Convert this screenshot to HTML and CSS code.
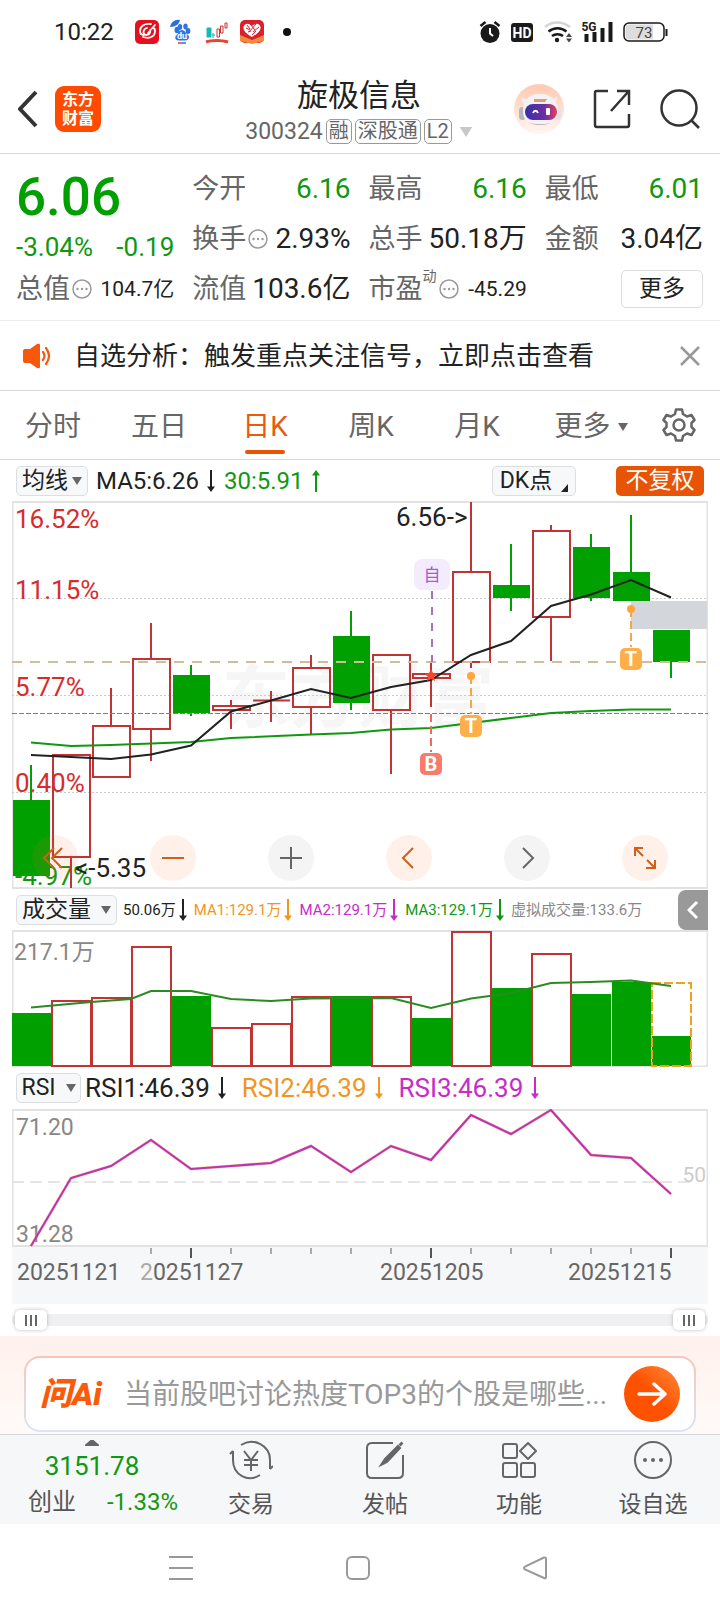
FILE: index.html
```html
<!DOCTYPE html>
<html lang="zh-CN">
<head>
    <meta charset="UTF-8">
    <meta name="viewport" content="width=device-width, initial-scale=1.0">
    <title>旋极信息 300324</title>
    <link rel="stylesheet" href="styles.css">
</head>
<body>

<!-- Shared symbols -->
<svg class="defs" width="0" height="0" aria-hidden="true">
    <symbol id="down" viewBox="0 0 8 24"><path d="M4 1V20" stroke="currentColor" stroke-width="2"/><path d="M0 17.500H8L4 23Z" fill="currentColor"/></symbol>
    <symbol id="up" viewBox="0 0 8 24"><path d="M4 23V4" stroke="currentColor" stroke-width="2"/><path d="M0 6.500H8L4 1Z" fill="currentColor"/></symbol>
    <symbol id="caret" viewBox="0 0 10 8"><path d="M0 0H10L5 8Z" fill="currentColor"/></symbol>
    <symbol id="info" viewBox="0 0 20 20"><circle cx="10" cy="10" r="9" fill="none" stroke="#999" stroke-width="1.500"/><g fill="#999"><circle cx="5.500" cy="10" r="1.200"/><circle cx="10" cy="10" r="1.200"/><circle cx="14.500" cy="10" r="1.200"/></g></symbol>
</svg>

<!-- Status bar -->
<div class="status">
    <span class="clock">10:22</span>
    <svg class="app-icons" viewBox="134 18 160 28" width="160" height="28">
        <rect x="135" y="20" width="24" height="24" rx="5" fill="#e60f1e"/>
        <path d="M155 25l-7 8M151 24c-6-1-11 2-11 7 0 3 2 4 4 4M143 37c6 2 12 0 12-6 0-2-1-3-2-3M147 28c-4 1-5 6-1 7 3 0 5-2 4-5" fill="none" stroke="#fff" stroke-width="1.800" stroke-linecap="round"/>
        <path d="M170 27c1-5 5-8 10-7-1 4-4 7-10 7Z" fill="#2d6fd9"/>
        <g fill="#2f74e6">
            <ellipse cx="177" cy="30" rx="2.500" ry="3.200"/><ellipse cx="180" cy="27" rx="2.200" ry="3"/><ellipse cx="185.500" cy="26.500" rx="2.200" ry="3"/><ellipse cx="188" cy="31" rx="2.400" ry="3"/>
            <path d="M182 30c3 0 4 4 6.500 5.500 1.500 2-.5 5-3 5h-7c-3 0-4-3-2.500-5 2.500-1.500 3-5.500 6-5.500Z"/>
        </g>
        <text x="182" y="39" class="du">du</text>
        <path d="M178 43h4" stroke="#e33" stroke-width="1.500"/><path d="M182 43h4" stroke="#2d6fd9" stroke-width="1.500"/>
        <path d="M207 28h4v9h-4ZM213 33v5M212 35h3" fill="#16b9b9" stroke="#16b9b9"/>
        <path d="M217 29h2.500v8H217ZM220.500 26h2.500v7h-2.500ZM225 23h2v5h-2Z" fill="none" stroke="#c33"/>
        <path d="M206 42c5-2 16-2 22 0" fill="none" stroke="#e8452c" stroke-width="3"/>
        <rect x="240" y="20" width="24" height="23" rx="5" fill="#d9202b"/>
        <path d="M240 35l12 5 12-5v6l-12 3-12-3Z" fill="#f08a3c"/>
        <path d="M252 37c-5-3-9-6-8.500-10 1-4 6-4 8.500-1 2.500-3 7.500-3 8.500 1 .5 4-3.500 7-8.500 10Z" fill="#fff"/>
        <path d="M247 25l3 4M250 24l5 6M256 24l-7 8M259 27l-6 5M246 28l4 2M252 35l4-4M248 32l3-1" stroke="#d9202b" stroke-width="1"/>
        <circle cx="287" cy="32" r="4" fill="#111"/>
    </svg>
    <svg class="sys-icons" viewBox="480 18 190 28" width="190" height="28">
        <circle cx="491" cy="33.500" r="9.500" fill="#1a1a1a"/>
        <path d="M481.500 26l5-4M500.500 26l-5-4" stroke="#1a1a1a" stroke-width="2.500"/>
        <path d="M491 28v5.500l3 2.500" fill="none" stroke="#fff" stroke-width="2"/>
        <rect x="512" y="23" width="22" height="19" rx="3" fill="#1a1a1a"/>
        <text x="523" y="38" class="hd">HD</text>
        <path d="M546 27c7-6 17-6 25 0" fill="none" stroke="#d5d5d5" stroke-width="2.500"/>
        <path d="M549.500 31.500c5.500-4.500 12.500-4.500 18 0M553 36c3-2.500 8-2.500 11 0" fill="none" stroke="#1a1a1a" stroke-width="2.500"/>
        <circle cx="558" cy="40" r="2.200" fill="#1a1a1a"/>
        <path d="M567 37l3-4 3 4ZM567 38.500l3 4 3-4Z" fill="#444"/>
        <text x="590" y="31" class="net">5G</text>
        <path d="M587.500 34v8M595.500 32v10M603.500 28v14M611.500 22v20" stroke="#1a1a1a" stroke-width="4"/>
        <rect x="625" y="23" width="40" height="18" rx="5" fill="#fff" stroke="#1a1a1a" stroke-width="1.500"/>
        <path d="M630 24.500h24v15h-24c-2.500 0-3.500-1.500-3.500-4v-7c0-2.500 1-4 3.500-4Z" fill="#ddd"/>
        <path d="M667.500 29v7" stroke="#1a1a1a" stroke-width="2"/>
        <text x="645" y="38" class="battery">73</text>
    </svg>
</div>

<!-- Header -->
<header class="header">
    <div class="header-side">
        <button class="icon-button" aria-label="返回"><svg viewBox="0 0 20 38" width="20" height="38"><path d="M18 2L2 19 18 36" fill="none" stroke="#333" stroke-width="4"/></svg></button>
        <a class="logo" href="#"><span>东方</span><span>财富</span></a>
    </div>
    <div class="title">
        <h1>旋极信息</h1>
        <div class="code">
            <span>300324</span><span class="tag">融</span><span class="tag">深股通</span><span class="tag">L2</span>
            <svg class="code-caret" width="14" height="10"><use href="#caret"/></svg>
        </div>
    </div>
    <div class="header-side header-tools">
        <button class="icon-button" aria-label="智能助手">
            <svg viewBox="0 0 50 50" width="50" height="50">
                <defs>
                    <linearGradient id="halo" x2="0" y2="1"><stop stop-color="#ffc9b0"/><stop offset="1" stop-color="#fff6f2"/></linearGradient>
                    <linearGradient id="visor"><stop stop-color="#3a2fa8"/><stop offset=".6" stop-color="#6c2fa0"/><stop offset="1" stop-color="#e0405c"/></linearGradient>
                </defs>
                <circle cx="25" cy="25" r="25" fill="url(#halo)"/>
                <path d="M7 13c0 5 2 7 6 8l4-5c-4 0-7-1-10-3ZM43 13c0 5-2 7-6 8l-4-5c4 0 7-1 10-3Z" fill="#f2eeee"/>
                <rect x="5" y="23" width="7" height="13" rx="3.500" fill="#b9b4ba"/><rect x="39" y="23" width="8" height="13" rx="4" fill="#e4e0e4"/>
                <path d="M26 10c13 0 18 8 18 17 0 10-7 14-18 14S9 37 9 27c0-9 4-17 17-17Z" fill="#f4f2f4"/>
                <path d="M14 38c6 4 18 4 24 0-5 3-18 3-24 0Z" fill="#aaa"/>
                <path d="M20 15h13l-2 3H20Z" fill="#d9a06a"/>
                <rect x="11" y="20" width="32" height="16" rx="8" fill="url(#visor)"/>
                <path d="M19 29c1-3 4-3 5 0" fill="none" stroke="#fff" stroke-width="1.800"/><rect x="32" y="24" width="4" height="7" rx="1" fill="#fff"/>
            </svg>
        </button>
        <button class="icon-button" aria-label="分享"><svg viewBox="0 0 38 40" width="38" height="40" fill="none" stroke="#333" stroke-width="2.500"><path d="M15 2H3.500Q2 2 2 4V36Q2 38 4 38H34Q36 38 36 36V25M24 2H36V16M35 3L18 22"/></svg></button>
        <button class="icon-button" aria-label="搜索"><svg viewBox="0 0 40 40" width="40" height="40" fill="none" stroke="#333" stroke-width="2.500"><circle cx="19" cy="19" r="17.500"/><path d="M31 31l8 8"/></svg></button>
    </div>
</header>

<!-- Quote -->
<section class="quote">
    <div class="quote-col">
        <div class="price">6.06</div>
        <div class="change"><span>-3.04%</span><span>-0.19</span></div>
        <div class="cell"><span class="name">总值</span><svg class="info" width="20" height="20"><use href="#info"/></svg><b class="small">104.7亿</b></div>
    </div>
    <div class="quote-col">
        <div class="cell"><span class="name">今开</span><b class="green">6.16</b></div>
        <div class="cell"><span class="name">换手</span><svg class="info" width="20" height="20"><use href="#info"/></svg><b>2.93%</b></div>
        <div class="cell"><span class="name">流值</span><b>103.6亿</b></div>
    </div>
    <div class="quote-col">
        <div class="cell"><span class="name">最高</span><b class="green">6.16</b></div>
        <div class="cell"><span class="name">总手</span><b>50.18万</b></div>
        <div class="cell"><span class="name">市盈</span><sup>动</sup><svg class="info" width="20" height="20"><use href="#info"/></svg><b class="small">-45.29</b></div>
    </div>
    <div class="quote-col">
        <div class="cell"><span class="name">最低</span><b class="green">6.01</b></div>
        <div class="cell"><span class="name">金额</span><b>3.04亿</b></div>
        <div class="cell"><button class="more">更多</button></div>
    </div>
</section>

<!-- Notice -->
<section class="notice">
    <svg viewBox="0 0 30 26" width="30" height="26"><path d="M1 8q0-2 2-2h5l7-5q3-1 3 1v22q0 2-3 1l-7-5H3q-2 0-2-2Z" fill="#f8570c"/><path d="M21 9q3 4 0 8M24 5q6 8 0 16" fill="none" stroke="#f8570c" stroke-width="2.200" stroke-linecap="round"/></svg>
    <p>自选分析：触发重点关注信号，立即点击查看</p>
    <button class="icon-button" aria-label="关闭"><svg viewBox="0 0 20 20" width="20" height="20"><path d="M1 1L19 19M19 1L1 19" stroke="#999" stroke-width="2.500"/></svg></button>
</section>

<!-- Period tabs -->
<nav class="tabs">
    <a href="#">分时</a>
    <a href="#">五日</a>
    <a href="#" class="active">日K</a>
    <a href="#">周K</a>
    <a href="#">月K</a>
    <a href="#" class="tab-more">更多<svg width="10" height="8"><use href="#caret"/></svg></a>
    <button class="icon-button settings" aria-label="设置">
        <svg viewBox="0 0 34 34" width="34" height="34" fill="none" stroke="#666" stroke-width="2.500"><path stroke-linejoin="round" d="M14 1.500H20L21 6 25 8.500 29.500 7 32.500 12 29.500 15V19L32.500 22 29.500 27 25 25.500 21 28 20 32.500H14L13 28 9 25.500 4.500 27 1.500 22 4.500 19V15L1.500 12 4.500 7 9 8.500 13 6Z"/><circle cx="17" cy="17" r="5.500"/></svg>
    </button>
</nav>

<main class="charts">
    <!-- Candles -->
    <div class="bar bar-ma">
        <button class="chip">均线<svg width="10" height="8"><use href="#caret"/></svg></button>
        <span>MA5:6.26</span><svg class="arrow" width="8" height="24"><use href="#down"/></svg>
        <span class="green">30:5.91</span><svg class="arrow green" width="8" height="24"><use href="#up"/></svg>
        <button class="chip dk">DK点<svg width="7" height="8"><path d="M7 0V8H0Z" fill="#222"/></svg></button>
        <button class="chip adjust">不复权</button>
    </div>
    <div class="kline">
        <svg class="chart" viewBox="12 501 696 388">
            <rect class="frame" x="12.500" y="502" width="695" height="386"/>
            <text class="watermark" x="222" y="722">东方财富</text>
            <path class="grid" d="M12 598.500H708M12 695.500H708M12 792.500H708"/>
            <g class="scale">
                <text x="15" y="528" class="up">16.52%</text>
                <text x="15" y="599" class="up">11.15%</text>
                <text x="15" y="696" class="up">5.77%</text>
                <text x="15" y="792" class="up">0.40%</text>
                <text x="15" y="885" class="down">-4.97%</text>
            </g>
            <rect x="631" y="601" width="76" height="28" fill="#d3d7dc"/>
            <g class="rise">
                <path d="M71 857V888M111 688V726M151 623V659M151 729V761M231 700V706M231 710V729M271 691V722M253 700.500H290M311 655V668M311 707V735M391 710V774M431 662V674M431 678V707M471 502V572M471 662V668M551 525V531M551 617V661"/>
                <rect x="53" y="755" width="37" height="102"/>
                <rect x="93" y="726" width="37" height="51"/>
                <rect x="133" y="659" width="37" height="70"/>
                <rect x="213" y="706" width="37" height="4"/>
                <rect x="293" y="668" width="37" height="39"/>
                <rect x="373" y="655" width="37" height="55"/>
                <rect x="413" y="674" width="37" height="4"/>
                <rect x="453" y="572" width="37" height="90"/>
                <rect x="533" y="531" width="37" height="86"/>
            </g>
            <g class="fall">
                <path d="M31 765V876M191 665V716M351 611V710M511 544V611M591 534V601M631 515V601M671 630V678"/>
                <rect x="13" y="800" width="37" height="76"/>
                <rect x="173" y="675" width="37" height="38"/>
                <rect x="333" y="636" width="37" height="67"/>
                <rect x="493" y="585" width="37" height="13"/>
                <rect x="573" y="547" width="37" height="51"/>
                <rect x="613" y="572" width="37" height="29"/>
                <rect x="653" y="630" width="37" height="32"/>
            </g>
            <path d="M12 662H708" class="cost"/>
            <path d="M12 713.500H708" class="hold"/>
            <polyline class="ma30" points="31,742.500 71,746 111,745 191,742 231,738 311,734.500 351,733 391,729.500 431,728 471,723 511,718 551,713 591,711 631,709.500 671,709.500"/>
            <polyline class="ma5" points="31,755 71,757 111,759 151,754.500 191,745.500 231,711.500 271,700.500 311,689 351,698 391,687 431,680 471,655 511,641 551,606 591,594.500 631,580 671,597.500"/>
            <text class="mark" x="396" y="526">6.56-&gt;</text>
            <text class="mark" x="75" y="877">&lt;-5.35</text>
            <!-- Signals -->
            <path d="M432 591V662" stroke="#a56fc4" stroke-width="2" stroke-dasharray="8 8"/>
            <rect x="414" y="559" width="36" height="31" rx="8" fill="#f4ecfd"/>
            <text class="self" x="432" y="581">自</text>
            <path d="M431 714V752" stroke="#f0695c" stroke-width="2" stroke-dasharray="8 4"/>
            <path d="M431 669l2 4 4 1-3 3 1 4-4-2-4 2 1-4-3-3 4-1Z" fill="#f8452c"/>
            <rect x="420" y="753" width="22" height="22" rx="5" fill="#f87b6e"/>
            <text class="flag" x="431" y="771">B</text>
            <path d="M471 676V714M631 609V647" stroke="#f5a742" stroke-width="2" stroke-dasharray="8 4"/>
            <circle cx="471" cy="676" r="4" fill="#ffa53a"/><circle cx="631" cy="609" r="4" fill="#ffa53a"/>
            <rect x="460" y="715" width="22" height="22" rx="5" fill="#ffae4a"/><rect x="620" y="648" width="22" height="22" rx="5" fill="#ffae4a"/>
            <text class="flag" x="471" y="733">T</text><text class="flag" x="631" y="666">T</text>
        </svg>
        <div class="tools">
            <button aria-label="最早"><svg viewBox="0 0 46 46"><path d="M22 13L12 23 22 33M30 13L20 23 30 33"/></svg></button>
            <button aria-label="缩小"><svg viewBox="0 0 46 46"><path d="M12 23H34"/></svg></button>
            <button aria-label="放大" class="gray"><svg viewBox="0 0 46 46"><path d="M12 23H34M23 12V34"/></svg></button>
            <button aria-label="左移"><svg viewBox="0 0 46 46"><path d="M27 13L17 23 27 33"/></svg></button>
            <button aria-label="右移" class="gray"><svg viewBox="0 0 46 46"><path d="M19 13L29 23 19 33"/></svg></button>
            <button aria-label="全屏"><svg viewBox="0 0 46 46"><path d="M13 21V13H21M13 13L21 21M33 25V33H24M33 33L25 25"/></svg></button>
        </div>
    </div>

    <!-- Volume -->
    <div class="bar bar-vol">
        <button class="chip chip-vol">成交量<svg width="10" height="8"><use href="#caret"/></svg></button>
        <span>50.06万<svg class="arrow" width="8" height="24"><use href="#down"/></svg></span>
        <span class="orange">MA1:129.1万<svg class="arrow" width="8" height="24"><use href="#down"/></svg></span>
        <span class="purple">MA2:129.1万<svg class="arrow" width="8" height="24"><use href="#down"/></svg></span>
        <span class="green">MA3:129.1万<svg class="arrow" width="8" height="24"><use href="#down"/></svg></span>
        <span class="muted">虚拟成交量:133.6万</span>
        <button class="expand" aria-label="展开"><svg viewBox="0 0 12 20" width="12" height="20"><path d="M10 2L2 10 10 18" fill="none" stroke="#fff" stroke-width="3"/></svg></button>
    </div>
    <svg class="chart" viewBox="12 930 696 137">
        <rect class="frame" x="12.500" y="931" width="695" height="135.500"/>
        <text class="value" x="14" y="960">217.1万</text>
        <g class="fall">
            <rect x="12" y="1013" width="39" height="53"/>
            <rect x="172" y="996" width="39" height="70"/>
            <rect x="332" y="996" width="39" height="70"/>
            <rect x="412" y="1018" width="39" height="48"/>
            <rect x="492" y="988" width="39" height="78"/>
            <rect x="572" y="994" width="39" height="72"/>
            <rect x="612" y="982" width="39" height="84"/>
            <rect x="652" y="1036" width="39" height="30"/>
        </g>
        <g class="rise">
            <rect x="52" y="1001" width="39" height="65"/>
            <rect x="92" y="998" width="39" height="68"/>
            <rect x="132" y="947" width="39" height="119"/>
            <rect x="212" y="1028" width="39" height="38"/>
            <rect x="252" y="1024" width="39" height="42"/>
            <rect x="292" y="997" width="39" height="69"/>
            <rect x="372" y="997" width="39" height="69"/>
            <rect x="452" y="932" width="39" height="134"/>
            <rect x="532" y="954" width="39" height="112"/>
        </g>
        <rect class="virtual" x="652" y="983" width="39" height="83"/>
        <polyline class="vol-ma" points="31,1007.500 91,1002 131,999 151,991 191,991 231,999 271,1001 311,998.500 391,998 431,1008 471,998.500 511,993 551,983 591,982 631,980.500 671,986"/>
    </svg>

    <!-- RSI -->
    <div class="bar bar-rsi">
        <button class="chip chip-rsi">RSI<svg width="10" height="8"><use href="#caret"/></svg></button>
        <span>RSI1:46.39<svg class="arrow" width="8" height="24"><use href="#down"/></svg></span>
        <span class="orange">RSI2:46.39<svg class="arrow" width="8" height="24"><use href="#down"/></svg></span>
        <span class="purple">RSI3:46.39<svg class="arrow" width="8" height="24"><use href="#down"/></svg></span>
    </div>
    <svg class="chart" viewBox="12 1109 696 195">
        <rect x="12" y="1247" width="696" height="57" fill="#f6f7f9"/>
        <rect class="frame" x="12.500" y="1110" width="695" height="136"/>
        <path d="M12 1182H690" stroke="#ddd" stroke-width="1.500" stroke-dasharray="12 6"/>
        <text class="value" x="16" y="1135">71.20</text>
        <text class="value" x="16" y="1242">31.28</text>
        <text class="level" x="706" y="1182">50</text>
        <polyline class="rsi-back" points="31,1246 71,1178 111,1166 151,1140 191,1169 231,1166 271,1163 311,1146 351,1172 391,1146 431,1160 471,1115 511,1134 551,1110 591,1155 631,1158 671,1194"/>
        <polyline class="rsi" points="31,1246 71,1178 111,1166 151,1140 191,1169 231,1166 271,1163 311,1146 351,1172 391,1146 431,1160 471,1115 511,1134 551,1110 591,1155 631,1158 671,1194"/>
        <path class="tick" d="M151 1248v6M231 1248v6M271 1248v6M311 1248v6M351 1248v6M391 1248v6M471 1248v6M511 1248v6M551 1248v6M591 1248v6M631 1248v6"/>
        <path class="tick long" d="M191 1248v10M431 1248v10M671 1248v10"/>
        <g class="dates">
            <text x="17" y="1280">20251121</text>
            <text x="140" y="1280"><tspan class="fade">2</tspan>0251127</text>
            <text x="380" y="1280">20251205</text>
            <text x="568" y="1280">20251215</text>
        </g>
    </svg>
    <div class="range">
        <input type="range" min="0" max="100" value="0" aria-label="开始日期">
        <input type="range" min="0" max="100" value="100" aria-label="结束日期">
    </div>
</main>

<!-- Ask AI -->
<section class="ask">
    <form class="ask-box">
        <span class="ask-logo">问Ai</span>
        <input type="text" aria-label="提问" placeholder="当前股吧讨论热度TOP3的个股是哪些...">
        <button type="button" class="send" aria-label="发送"><svg viewBox="0 0 30 26" width="30" height="26" fill="none" stroke="#fff" stroke-width="3.500" stroke-linecap="round" stroke-linejoin="round"><path d="M2 13H28M17 3L28 13 17 23"/></svg></button>
    </form>
</section>

<!-- Bottom bar -->
<nav class="bottom">
    <a href="#" class="index">
        <svg viewBox="0 0 14 6" width="14" height="6"><path d="M0 6L7 0 14 6Z" fill="#666"/></svg>
        <span class="index-value">3151.78</span>
        <span class="index-row"><span>创业</span><span class="green">-1.33%</span></span>
    </a>
    <a href="#"><svg viewBox="0 0 44 40" width="44" height="40"><path d="M12 5C24-3 41 5 41 20v9M41 29l3-3M31 35C19 43 4 35 4 20v-9M4 11l-3 3"/><path d="M15 11l7 9 7-9M22 20V31M15 20H29M15 25H29"/></svg>交易</a>
    <a href="#"><svg viewBox="0 0 40 40" width="40" height="40"><path d="M28 3H7Q2 3 2 8V33Q2 38 7 38H33Q38 38 38 33V15"/><path d="M16 25l4-6L33 6l2 2L22 22Z" fill="#666"/><path d="M35 3l2 2" stroke-width="4"/></svg>发帖</a>
    <a href="#"><svg viewBox="0 0 36 40" width="36" height="40"><rect x="2" y="4" width="14" height="14" rx="2"/><rect x="2" y="23" width="14" height="14" rx="2"/><rect x="20" y="23" width="14" height="14" rx="2"/><path d="M27 3l8 8-8 8-8-8Z" stroke-linejoin="round"/></svg>功能</a>
    <a href="#"><svg viewBox="0 0 40 40" width="40" height="40"><circle cx="20" cy="20" r="18"/><g fill="#666" stroke="none"><circle cx="12" cy="20" r="2"/><circle cx="20" cy="20" r="2"/><circle cx="28" cy="20" r="2"/></g></svg>设自选</a>
</nav>

<!-- System navigation -->
<footer class="system">
    <button class="icon-button" aria-label="任务"><svg viewBox="0 0 26 26" width="26" height="26"><path d="M1 2H25M1 13H25M1 24H25"/></svg></button>
    <button class="icon-button" aria-label="主页"><svg viewBox="0 0 26 26" width="26" height="26"><rect x="2" y="2" width="22" height="22" rx="5"/></svg></button>
    <button class="icon-button" aria-label="后退"><svg viewBox="0 0 26 26" width="26" height="26"><path d="M22 2.500Q24 2 24 4V22Q24 24 22 23L3 14.500Q1 13 3 11.500Z"/></svg></button>
</footer>

</body>
</html>
```
FILE: styles.css
```css
* {
    box-sizing: border-box;
}
body {
    margin: 0;
    background-color: #fff;
    color: #222;
    font-family: Roboto, "Noto Sans CJK SC", sans-serif;
    font-size: 24px;
    line-height: 32px;
}
a {
    color: inherit;
    text-decoration: none;
}
button, input {
    font: inherit;
    color: inherit;
    padding: 0;
    border: none;
    background: none;
}
button {
    cursor: pointer;
}
svg {
    display: block;
    flex: none;
}
.defs {
    position: absolute;
}
.icon-button {
    display: flex;
    align-items: center;
    justify-content: center;
}

/* Colours of values */
.green { color: #109810; }
.orange { color: #f0961e; }
.purple { color: #c82cc8; }
.muted { color: #888; }

/* Status bar */
.status {
    display: flex;
    align-items: center;
    height: 64px;
    padding: 0 51px 0 54px;
}
.clock {
    width: 80px;
    font-size: 24px;
}
.sys-icons {
    margin-left: auto;
}
.status text {
    text-anchor: middle;
    font-weight: bold;
}
.du { font-size: 9px; fill: #fff; }
.hd { font-size: 14px; fill: #fff; }
.net { font-size: 12px; fill: #1a1a1a; }
.status .battery { font-size: 15px; font-weight: normal; fill: #444; }

/* Header */
.header {
    display: flex;
    align-items: center;
    height: 90px;
    padding: 0 20px 0 18px;
    border-bottom: 1px solid #d8d8d8;
}
.header-side {
    display: flex;
    flex: 1;
    align-items: center;
    gap: 17px;
}
.header-tools {
    justify-content: flex-end;
    gap: 29px;
}
.logo {
    display: flex;
    flex-direction: column;
    align-items: center;
    justify-content: center;
    width: 46px;
    height: 46px;
    border-radius: 9px;
    background-color: #ff4a00;
    color: #fff;
    font-size: 16px;
    font-weight: bold;
    line-height: 19px;
}
.title {
    padding-top: 6px;
    text-align: center;
}
.title h1 {
    margin: 0;
    font-size: 31px;
    font-weight: normal;
    line-height: 40px;
}
.code {
    display: flex;
    align-items: center;
    gap: 3px;
    color: #666;
    font-size: 23px;
}
.tag {
    height: 25px;
    padding: 0 2px;
    border: 1px solid #999;
    border-radius: 5px;
    font-size: 20px;
    line-height: 23px;
}
.code-caret {
    margin-left: 4px;
    color: #c8c8c8;
}

/* Quote */
.quote {
    display: grid;
    grid-template-columns: repeat(4, 1fr);
    gap: 18px;
    padding: 10px 17px 6px 16px;
    border-bottom: 1px solid #ececec;
}
.cell {
    display: flex;
    align-items: center;
    height: 50px;
    white-space: nowrap;
}
.name {
    color: #666;
    font-size: 27px;
}
.cell b {
    margin-left: auto;
    font-size: 28px;
    font-weight: normal;
}
.cell .small {
    font-size: 21px;
}
.cell sup {
    align-self: flex-start;
    color: #666;
    font-size: 14px;
    line-height: 24px;
}
.info {
    margin-left: 2px;
}
.price {
    height: 64px;
    color: #00a000;
    font-size: 53px;
    font-weight: 500;
    line-height: 66px;
}
.change {
    display: flex;
    justify-content: space-between;
    height: 36px;
    color: #109810;
    font-size: 26px;
    line-height: 38px;
}
.more {
    width: 82px;
    height: 38px;
    margin-left: auto;
    border: 1px solid #ddd;
    border-radius: 5px;
    font-size: 23px;
}

/* Notice */
.notice {
    display: flex;
    align-items: center;
    height: 70px;
    padding: 0 20px 0 22px;
    border-bottom: 1px solid #d8d8d8;
}
.notice p {
    flex: 1;
    margin: 0 0 0 22px;
    font-size: 26px;
}

/* Period tabs */
.tabs {
    display: flex;
    height: 69px;
    padding-right: 14px;
    border-bottom: 1px solid #d8d8d8;
    color: #666;
    font-size: 28px;
}
.tabs a {
    display: flex;
    flex: 1;
    flex-direction: column;
    align-items: center;
    padding-top: 20px;
}
.tabs .active {
    color: #e85a0c;
}
.tabs .active::after {
    content: "";
    width: 40px;
    height: 4px;
    margin-top: 7px;
    border-radius: 2px;
    background-color: #e85405;
}
.tabs .tab-more {
    flex: none;
    flex-direction: row;
    align-items: flex-start;
    justify-content: center;
    gap: 7px;
    width: 122px;
}
.tab-more svg {
    margin-top: 12px;
}
.settings {
    width: 54px;
}

/* Chart rows */
.charts {
    padding: 0 12px;
}
.chart {
    width: 100%;
    height: auto;
}
.bar {
    display: flex;
    align-items: center;
    height: 41px;
    padding-left: 4px;
    white-space: nowrap;
}
.bar span {
    display: flex;
    align-items: center;
}
.chip {
    display: flex;
    align-items: center;
    justify-content: center;
    gap: 4px;
    width: 72px;
    height: 30px;
    border: 1px solid #dcdfe2;
    border-radius: 5px;
    background-color: #f6f8fa;
    font-size: 23px;
    line-height: 28px;
}
.chip svg {
    color: #666;
}
.bar-ma .arrow {
    margin: 0 9px 0 8px;
}
.bar-ma span:first-of-type {
    margin-left: 8px;
}
.dk {
    gap: 9px;
    width: 84px;
    margin-left: auto;
}
.dk svg {
    align-self: flex-end;
    margin-bottom: 3px;
}
.adjust {
    width: 88px;
    margin: 0 4px 0 40px;
    border: none;
    background-color: #e85405;
    color: #fff;
}
.bar-vol {
    gap: 6px;
    font-size: 15px;
}
.bar-vol span {
    gap: 3px;
    margin-right: 1px;
}
.chip-vol {
    gap: 10px;
    width: 101px;
}
.expand {
    display: flex;
    align-items: center;
    justify-content: center;
    width: 30px;
    height: 40px;
    margin-left: auto;
    border-radius: 8px 0 0 8px;
    background-color: #999;
}
.bar-rsi {
    gap: 4px;
    height: 42px;
    font-size: 26px;
}
.bar-rsi span {
    gap: 8px;
    margin-right: 12px;
}
.chip-rsi {
    gap: 10px;
    width: 65px;
}

/* Chart drawing */
.frame { fill: none; stroke: #e2e2e2; stroke-width: 2; }
.grid { stroke: #ccc; stroke-dasharray: 2 2; }
.watermark { font-size: 68px; font-weight: bold; fill: #f6f6f6; }
.scale, .mark { font-size: 26px; }
.mark { fill: #222; }
.scale .up { fill: #d82c2c; }
.scale .down { fill: #109810; }
.rise { fill: none; stroke: #c03434; stroke-width: 2; }
.fall rect { fill: #00a000; }
.fall path { stroke: #00a000; stroke-width: 2; }
.cost { stroke: #d2bd98; stroke-width: 2; stroke-dasharray: 10 8; }
.hold { stroke: #c8692a; stroke-width: 1; stroke-dasharray: 5 2; }
.ma5, .ma30, .vol-ma, .rsi, .rsi-back { fill: none; stroke-width: 2; }
.ma5 { stroke: #222; }
.ma30 { stroke: #109810; }
.vol-ma { stroke: #2c8a24; }
.rsi { stroke: #c030b4; }
.rsi-back { stroke: #e09a50; stroke-width: 3; opacity: .5; }
.self { font-size: 17px; fill: #a05fd0; text-anchor: middle; }
.flag { font-size: 20px; font-weight: bold; fill: #fff; text-anchor: middle; }
.value { font-size: 23px; fill: #888; }
.level { font-size: 21px; fill: #ccc; text-anchor: end; }
.virtual { fill: none; stroke: #f0a020; stroke-width: 2; stroke-dasharray: 9 3; }
.tick { stroke: #aaa; stroke-width: 2; }
.tick.long { stroke: #555; }
.dates { font-size: 23px; fill: #666; }
.fade { fill: #aaa; }

/* Round tools over the candles */
.kline {
    position: relative;
}
.tools {
    position: absolute;
    right: 40px;
    bottom: 8px;
    left: 20px;
    display: flex;
    justify-content: space-between;
}
.tools button {
    width: 46px;
    height: 46px;
    border-radius: 50%;
    background-color: rgba(255, 110, 40, .1);
}
.tools .gray {
    background-color: #f4f4f4;
}
.tools svg {
    fill: none;
    stroke: #cf5f1c;
    stroke-width: 2;
}
.tools .gray svg {
    stroke: #666;
}

/* Date range */
.range {
    display: grid;
    align-items: center;
    height: 32px;
}
.range::before {
    content: "";
    grid-area: 1 / 1;
    height: 12px;
    border-radius: 6px;
    background-color: #f0f0f2;
}
.range input {
    grid-area: 1 / 1;
    -webkit-appearance: none;
    appearance: none;
    width: auto;
    height: 24px;
    margin: 0 3px;
    pointer-events: none;
}
.range input::-webkit-slider-thumb {
    -webkit-appearance: none;
    width: 32px;
    height: 20px;
    border-radius: 5px;
    background: repeating-linear-gradient(to right, #666 0 2px, transparent 2px 5px) center / 12px 11px no-repeat #fff;
    box-shadow: 0 0 4px rgba(0, 0, 0, .25);
    pointer-events: auto;
}

/* Ask AI */
.ask {
    padding: 20px 24px 2px;
    background: linear-gradient(#fff1ec, #fffaf8);
}
.ask-box {
    display: flex;
    align-items: center;
    height: 76px;
    margin: 0;
    padding: 0 14px;
    border: 2px solid transparent;
    border-radius: 16px;
    background: linear-gradient(#fff, #fff) padding-box, linear-gradient(#f8c4b8, #dce4f4) border-box;
}
.ask-logo {
    width: 84px;
    color: #fa5a0a;
    font-size: 32px;
    font-style: italic;
    font-weight: 900;
}
.ask-box input {
    flex: 1;
    min-width: 0;
    height: 40px;
    font-size: 28px;
    outline: none;
}
.ask-box input::placeholder {
    color: #999;
}
.send {
    display: flex;
    align-items: center;
    justify-content: center;
    width: 56px;
    height: 56px;
    border-radius: 50%;
    background: linear-gradient(45deg, #ff5200 50%, #ff8a3c);
}

/* Bottom bar */
.bottom {
    display: flex;
    height: 90px;
    border-top: 1px solid #d0d5da;
    background-color: #f6f7f9;
    color: #555;
    font-size: 23px;
}
.bottom a {
    display: flex;
    flex: 134;
    flex-direction: column;
    align-items: center;
    gap: 9px;
    padding-top: 5px;
}
.bottom a > svg {
    fill: none;
    stroke: #666;
    stroke-width: 2;
}
.bottom .index {
    flex: 184;
    gap: 4px;
}
.index-value {
    color: #109810;
    font-size: 26px;
}
.index-row {
    display: flex;
    align-self: stretch;
    justify-content: space-between;
    padding: 0 6px 0 28px;
    font-size: 24px;
}

/* System navigation */
.system {
    display: flex;
    align-items: center;
    justify-content: center;
    gap: 151px;
    height: 88px;
    padding-right: 4px;
}
.system svg {
    fill: none;
    stroke: #999;
    stroke-width: 2;
}
```
